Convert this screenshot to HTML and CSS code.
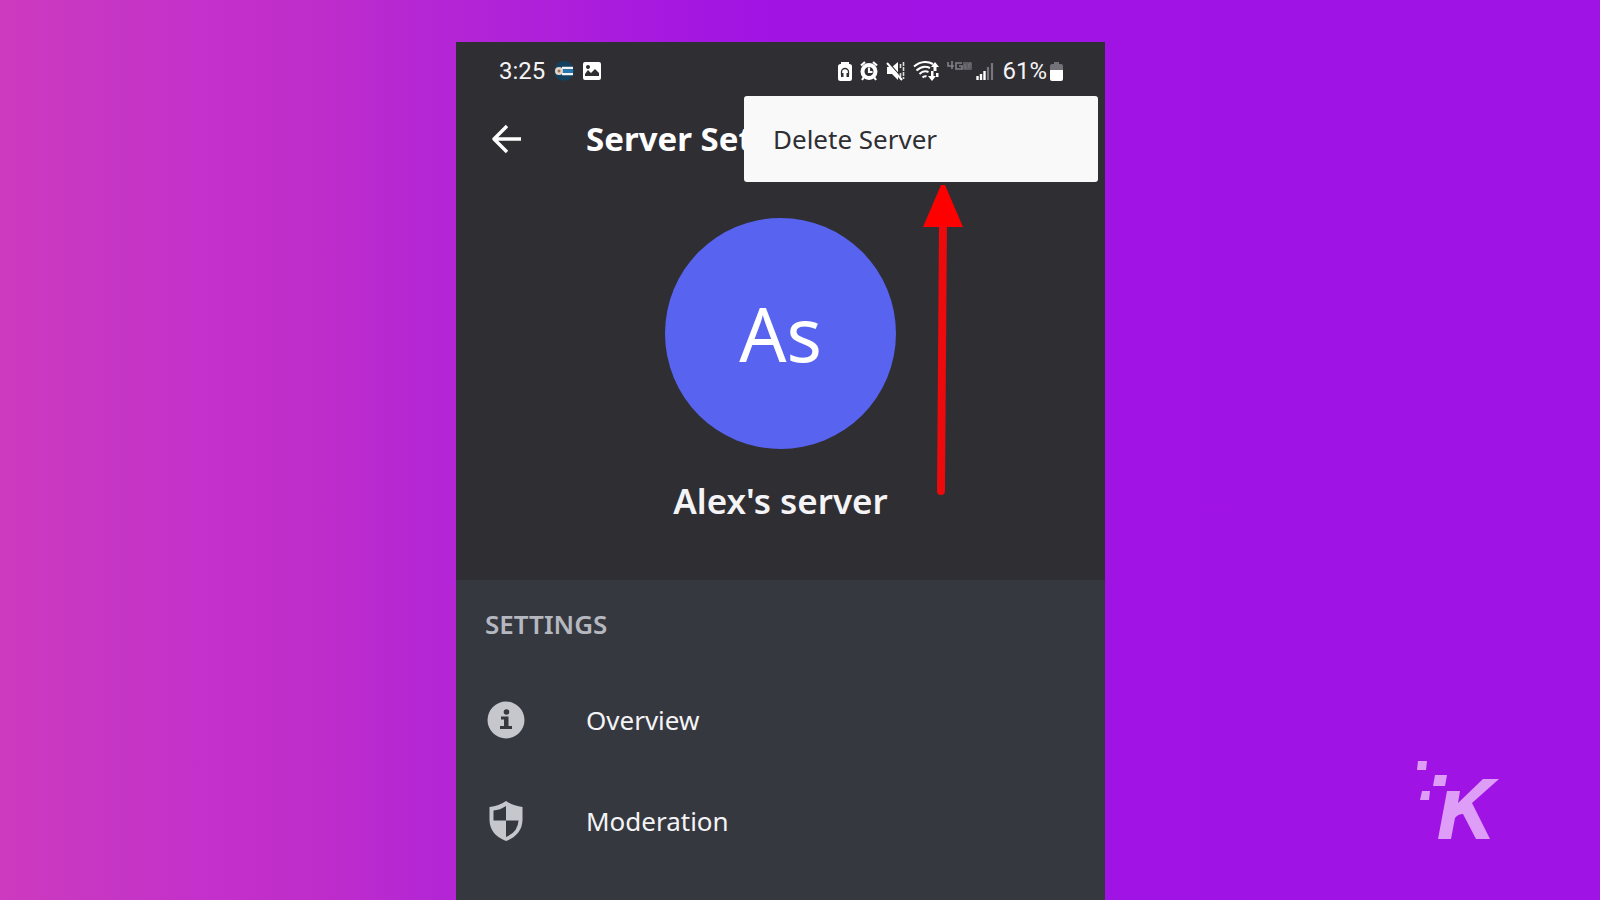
FILE: index.html
```html
<!DOCTYPE html>
<html lang="en">
<head>
<meta charset="utf-8">
<meta name="viewport" content="width=device-width, initial-scale=1">
<title>Server Settings</title>
<link rel="stylesheet" href="styles.css">
</head>
<body>
<div class="stage">
  <main class="phone">
    <div class="top">
      <div class="status">
        <div class="status-group">
          <span class="clock">3:25</span>
          <svg class="ico app" width="22" height="22" viewBox="0 0 22 22" aria-hidden="true"><circle cx="11" cy="11" r="10" fill="#12405f"/><circle cx="6" cy="11" r="4" fill="#e6d3c4"/><path d="M9 8h11M9 14h11" stroke="#eef4f8" stroke-width="2.5"/><path d="M10 11h10" stroke="#1d78b4" stroke-width="3"/><circle cx="6" cy="11" r="1.5" fill="#8d7468"/></svg>
          <svg class="ico" width="18" height="18" viewBox="0 0 18 18" aria-hidden="true"><path fill="#fff" fill-rule="evenodd" d="M2 0h14a2 2 0 0 1 2 2v14a2 2 0 0 1-2 2H2a2 2 0 0 1-2-2V2a2 2 0 0 1 2-2zm0 14h14v-3l-4-4-4 4-3-3-3 4zM5 3a2 2 0 1 0 .01 0z"/></svg>
        </div>
        <div class="status-group right">
          <svg class="ico" width="14" height="20" viewBox="0 0 14 20" aria-hidden="true"><path fill="#fff" d="M3 1h8v2h.500q2.500 0 2.500 2.500V17.500q0 2.500-2.500 2.500h-9Q0 20 0 17.500v-12Q0 3 2.500 3H3z"/><path d="M3.500 14v-3a3.500 3.500 0 0 1 7 0v3" fill="none" stroke="#2f2e33" stroke-width="1.300"/><path fill="#2f2e33" d="M3 12h2.500v4H3zM8.500 12H11v4H8.500z"/></svg>
          <svg class="ico" width="18" height="20" viewBox="0 0 18 20" aria-hidden="true"><circle cx="9" cy="10.500" r="6.500" fill="#2f2e33" stroke="#fff" stroke-width="4"/><path d="M1 4.500 5 1M17 4.500 13 1M4 16l-2 3M14 16l2 3M9 6.500V11h3.500" fill="none" stroke="#fff" stroke-width="2.200"/></svg>
          <svg class="ico" width="19" height="20" viewBox="0 0 19 20" aria-hidden="true"><path fill="#fff" d="M1 6h5l6-5v18l-6-6H1z"/><path d="M3 2l14 16" stroke="#2f2e33" stroke-width="1.200"/><path d="M1 2l15 17" stroke="#fff" stroke-width="2"/><path d="M14.500 3v5M14.500 12v4M17.500 1v17" stroke="#ddd" stroke-width="1.600" stroke-dasharray="4 1"/></svg>
          <svg class="ico" width="26" height="20" viewBox="0 0 26 20" aria-hidden="true"><path d="M1 5.500Q10-2 20 3M3.500 9.500Q10 3.500 17 7M6.500 13q4-4 9-2M9.500 16.500q2-2 4-1" fill="none" stroke="#fff" stroke-width="2"/><path fill="#fff" d="M22 1l4 5h-2.500v4h-3V6H18zM18 10v5h-3l4 5 4-5h-2.500v-5zM23 12h2.500v4H23z"/></svg>
          <svg class="ico net" width="26" height="12" viewBox="0 0 26 12" aria-hidden="true"><path d="M1 1v4h6M5 0v8M15 2H9v6h6V5h-3" fill="none" stroke="#818086" stroke-width="1.600"/><rect x="16" y="1" width="9" height="8" rx="1" fill="#5d5c62"/><path d="M18 3v4h2M22 7V3h2" fill="none" stroke="#77767c"/></svg>
          <svg class="ico" width="18" height="18" viewBox="0 0 18 18" aria-hidden="true"><path d="M1.500 14v4M5 12v6M8.500 9v9" stroke="#fff" stroke-width="2.400"/><path d="M12 5v13M16 1v17" stroke="#77767c" stroke-width="2.200"/></svg>
          <span class="charge">61%</span>
          <svg class="ico battery" width="13" height="19" viewBox="0 0 13 19" aria-hidden="true"><path fill="#737278" d="M4 0h5v2h2q2 0 2 2v4H0V4q0-2 2-2h2z"/><path fill="#fff" d="M0 8h13v9q0 2-2 2H2q-2 0-2-2z"/></svg>
        </div>
      </div>
      <header class="bar">
        <button class="back" type="button" aria-label="Back"><svg width="30" height="30" viewBox="0 0 30 30" aria-hidden="true"><path d="M29 15H2M15 2 2 15l13 13" fill="none" stroke="#fff" stroke-width="3.400" stroke-linejoin="round"/></svg></button>
        <h1 class="title">Server Settings</h1>
        <div class="menu" role="menu"><button class="menu-item" type="button" role="menuitem">Delete Server</button></div>
      </header>
      <section class="profile">
        <div class="avatar">As</div>
        <h2 class="name">Alex's server</h2>
        <svg class="pointer" width="40" height="312" viewBox="0 0 40 312" aria-hidden="true"><path d="M20 38 18 306" stroke="#ec0a0c" stroke-width="8" stroke-linecap="round"/><path fill="#f00" d="M18 0h4l18 42H0z"/></svg>
      </section>
    </div>
    <section class="settings">
      <h3 class="heading">SETTINGS</h3>
      <nav class="list">
        <a class="row" href="#overview"><svg class="row-icon" width="38" height="38" viewBox="0 0 38 38" aria-hidden="true"><circle cx="19" cy="19" r="18.500" fill="#c5c7cc"/><circle cx="19.500" cy="11" r="2.800" fill="#363840"/><path fill="#363840" d="M14 15.500h7.500V25H25v3H13v-3h4v-6.500h-3z"/></svg><span>Overview</span></a>
        <a class="row" href="#moderation"><svg class="row-icon" width="38" height="42" viewBox="0 0 38 42" aria-hidden="true"><path fill="#c5c7cc" d="M19 1q7 5 16.500 6v13Q35 35 19 41 3 35 2.500 20V7Q12 6 19 1z"/><path fill="#363840" d="M19 6v14.500H6.500V10.500Q13 10 19 6zM19 20.500h12.500Q31 32 19 37z"/></svg><span>Moderation</span></a>
      </nav>
    </section>
  </main>
  <svg class="brand" width="84" height="80" viewBox="0 0 84 80" role="img" aria-label="K"><path fill="#de9df7" d="M2 1h9l-1 9H1zM19 15h12l-2 11H17zM6 31h8l-1 9H4zM31 31h13l-2 12 25-24h16L56 43l18 36H60L47 54q-5 0-8 4l-4 21H22z"/></svg>
</div>
</body>
</html>
```
FILE: styles.css
```css
* { box-sizing: border-box; }
body { margin: 0; font-family: "Noto Sans", "Open Sans", sans-serif; color: #f4f4f6; }
h1, h2, h3 { margin: 0; }
button { border: 0; padding: 0; background: none; font: inherit; color: inherit; cursor: pointer; }
svg { display: block; flex: none; }

.stage {
  position: relative;
  display: grid;
  grid-template-columns: minmax(0, 456fr) minmax(0, 649fr) minmax(0, 495fr);
  min-height: 100vh;
  padding-top: 42px;
  background: linear-gradient(90deg, #cd3abf 0%, #c535c5 8%, #c430cb 13%, #be2dca 20%, #b527d3 26%, #b022d8 32%, #a81ade 40%, #a013e3 48%, #9f13e5 100%);
}
.phone { grid-column: 2; display: flex; flex-direction: column; background: #363840; }
.top { height: 538px; background: #2f2e33; }

.status { display: flex; justify-content: space-between; align-items: center; height: 58px; padding: 0 42px 0 43px; font-family: Roboto, sans-serif; }
.status-group { display: flex; align-items: center; gap: 8px; }
.clock, .charge { font-size: 24px; line-height: 28px; }
.net { align-self: flex-start; margin: 4px -5px 0 0; }
.battery { margin-left: -5px; }

.bar { position: relative; display: flex; align-items: center; gap: 64px; height: 78px; padding: 0 361px 0 36px; }
.back { display: flex; }
.title { min-width: 0; overflow: hidden; font-size: 33px; line-height: 40px; font-weight: 700; white-space: nowrap; color: #fff; }
.menu { position: absolute; top: -4px; right: 7px; width: 354px; border-radius: 3px; background: #f9f9f9; color: #2f2e33; }
.menu-item { width: 100%; padding: 23px 29px; font-size: 26px; line-height: 40px; text-align: left; }

.profile { position: relative; display: flex; flex-direction: column; align-items: center; padding-top: 40px; }
.avatar { display: grid; place-items: center; width: 231px; height: 231px; border-radius: 50%; background: #5863f0; color: #fff; font-size: 74px; line-height: 80px; }
.name { margin-top: 32px; font-size: 35px; line-height: 40px; font-weight: 600; }
.pointer { position: absolute; top: 7px; right: 142px; }

.settings { padding-top: 27px; }
.heading { padding-left: 29px; font-size: 26px; line-height: 34px; font-weight: 600; color: #b6b8c0; }
.list { margin-top: 28px; }
.row { display: flex; align-items: center; gap: 61px; height: 101px; padding-left: 31px; font-size: 26px; color: inherit; text-decoration: none; }
.brand { position: absolute; right: 100px; bottom: 60px; }
```
